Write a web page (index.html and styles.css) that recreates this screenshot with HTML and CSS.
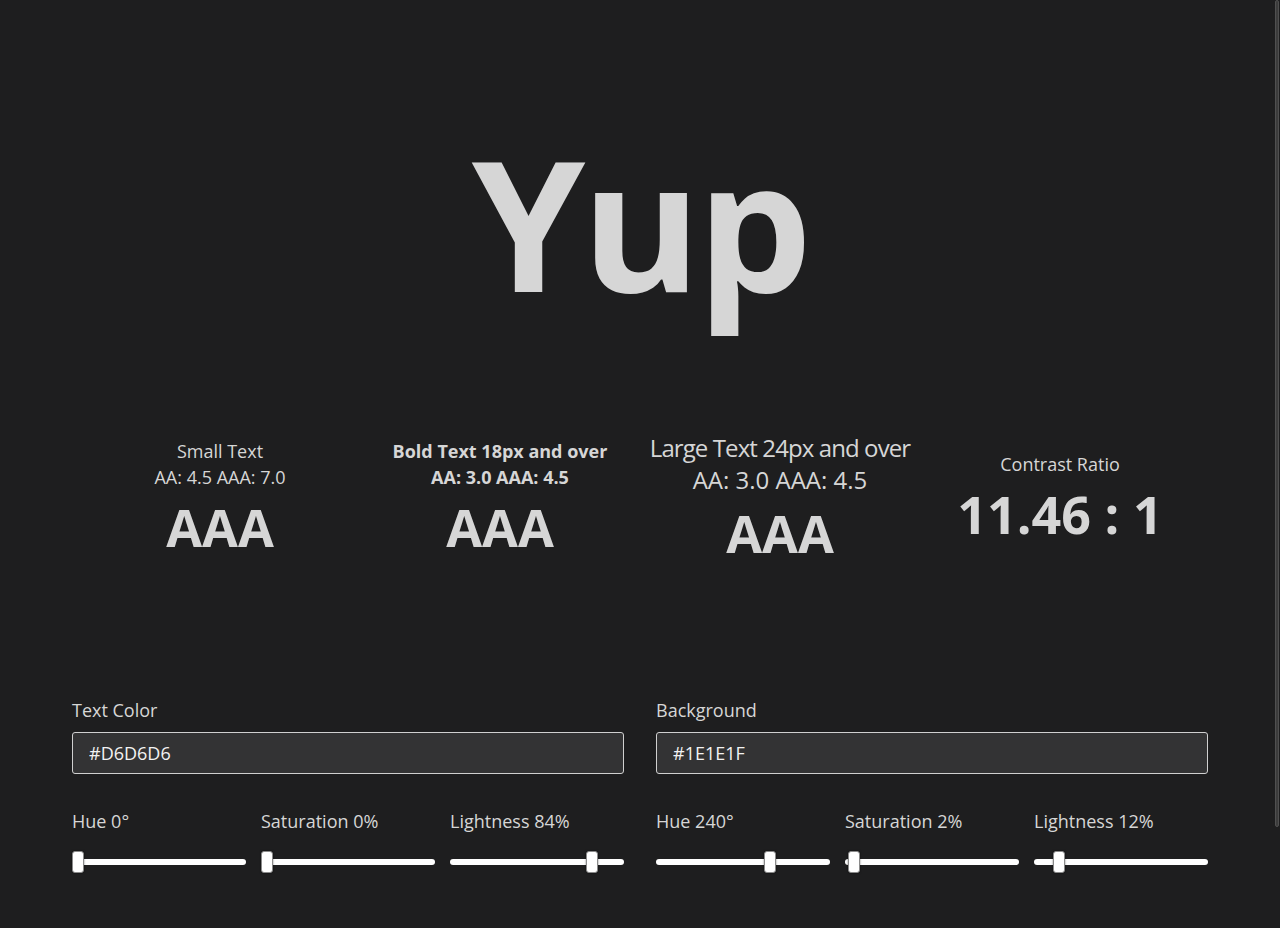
FILE: index.html
```html
<!DOCTYPE html>
<html lang="en">
<head>
<meta charset="utf-8">
<title>Contrast Checker</title>
<link rel="stylesheet" href="styles.css">
</head>
<body>
<main class="page">
  <section class="hero">
    <h1 class="sample">Yup</h1>
  </section>

  <section class="metrics">
    <div class="metric">
      <div class="metric-title">Small Text</div>
      <div class="metric-req">AA: 4.5 AAA: 7.0</div>
      <div class="metric-grade">AAA</div>
    </div>
    <div class="metric metric-bold">
      <div class="metric-title">Bold Text 18px and over</div>
      <div class="metric-req">AA: 3.0 AAA: 4.5</div>
      <div class="metric-grade">AAA</div>
    </div>
    <div class="metric metric-large">
      <div class="metric-title">Large Text 24px and over</div>
      <div class="metric-req">AA: 3.0 AAA: 4.5</div>
      <div class="metric-grade">AAA</div>
    </div>
    <div class="metric">
      <div class="metric-title">Contrast Ratio</div>
      <div class="metric-grade">11.46 : 1</div>
    </div>
  </section>

  <section class="controls">
    <div class="color-group">
      <label class="field-label" for="fg">Text Color</label>
      <input class="hex-input" id="fg" type="text" value="#D6D6D6">
      <div class="sliders">
        <div class="slider">
          <label class="slider-label">Hue 0°</label>
          <input class="range" type="range" min="0" max="360" value="0">
        </div>
        <div class="slider">
          <label class="slider-label">Saturation 0%</label>
          <input class="range" type="range" min="0" max="100" value="0">
        </div>
        <div class="slider">
          <label class="slider-label">Lightness 84%</label>
          <input class="range" type="range" min="0" max="100" value="84">
        </div>
      </div>
    </div>
    <div class="color-group">
      <label class="field-label" for="bg">Background</label>
      <input class="hex-input" id="bg" type="text" value="#1E1E1F">
      <div class="sliders">
        <div class="slider">
          <label class="slider-label">Hue 240°</label>
          <input class="range" type="range" min="0" max="360" value="240">
        </div>
        <div class="slider">
          <label class="slider-label">Saturation 2%</label>
          <input class="range" type="range" min="0" max="100" value="2">
        </div>
        <div class="slider">
          <label class="slider-label">Lightness 12%</label>
          <input class="range" type="range" min="0" max="100" value="12">
        </div>
      </div>
    </div>
  </section>
</main>
<div class="scroll-thumb"></div>
</body>
</html>
```

FILE: styles.css
```css
html, body {
  margin: 0;
  padding: 0;
}

body {
  background: #1e1e1f;
  color: #d6d6d6;
  font-family: "Open Sans", "Noto Sans", "DejaVu Sans", sans-serif;
  font-size: 18px;
  line-height: 26px;
  min-height: 928px;
  overflow: hidden;
}

.page {
  display: flex;
  flex-direction: column;
}

.hero {
  padding-top: 130px;
  display: flex;
  justify-content: center;
}

.sample {
  margin: 0;
  font-size: 182px;
  line-height: 182px;
  font-weight: 700;
  letter-spacing: -4px;
}

.metrics {
  margin-top: 120px;
  padding: 0 80px;
  display: grid;
  grid-template-columns: repeat(4, 1fr);
  align-items: center;
  text-align: center;
}

.metric {
  display: flex;
  flex-direction: column;
  align-items: center;
  white-space: nowrap;
}

.metric-title,
.metric-req {
  font-size: 18px;
  line-height: 26px;
}

.metric-bold .metric-title,
.metric-bold .metric-req {
  font-weight: 700;
}

.metric-large .metric-title,
.metric-large .metric-req {
  font-size: 24px;
  line-height: 32px;
}

.metric-large .metric-title {
  letter-spacing: -0.9px;
}

.metric-grade {
  margin-top: 4px;
  font-size: 52px;
  line-height: 65px;
  font-weight: 700;
}

.controls {
  margin-top: 132px;
  padding: 0 72px;
  display: grid;
  grid-template-columns: 1fr 1fr;
  column-gap: 32px;
}

.color-group {
  display: flex;
  flex-direction: column;
}

.field-label {
  font-size: 18px;
  line-height: 26px;
  margin-bottom: 9px;
}

.hex-input {
  box-sizing: border-box;
  height: 42px;
  margin: 0;
  padding: 0 16px;
  background: #333334;
  border: 1px solid #d0d0d0;
  border-radius: 3px;
  color: #f2f2f2;
  font-family: inherit;
  font-size: 18px;
  outline: none;
}

.sliders {
  margin-top: 34px;
  display: grid;
  grid-template-columns: repeat(3, 1fr);
  column-gap: 15px;
}

.slider {
  display: flex;
  flex-direction: column;
}

.slider-label {
  font-size: 18px;
  line-height: 26px;
  margin-bottom: 17px;
}

.range {
  -webkit-appearance: none;
  appearance: none;
  width: 100%;
  height: 22px;
  margin: 0;
  padding: 0;
  background: transparent;
}

.range::-webkit-slider-runnable-track {
  height: 6px;
  background: #ffffff;
  border-radius: 3px;
}

.range::-webkit-slider-thumb {
  -webkit-appearance: none;
  appearance: none;
  box-sizing: border-box;
  width: 12px;
  height: 22px;
  margin-top: -8px;
  background: #ffffff;
  border: 1px solid #8a8a8a;
  border-radius: 3px;
  box-shadow: 0 0 2px rgba(0, 0, 0, 0.6);
}

.scroll-thumb {
  position: fixed;
  top: 0;
  right: 1px;
  width: 2px;
  height: 825px;
  background: #3c3c3c;
  border: 1px solid #505050;
  border-radius: 2px;
}
```
